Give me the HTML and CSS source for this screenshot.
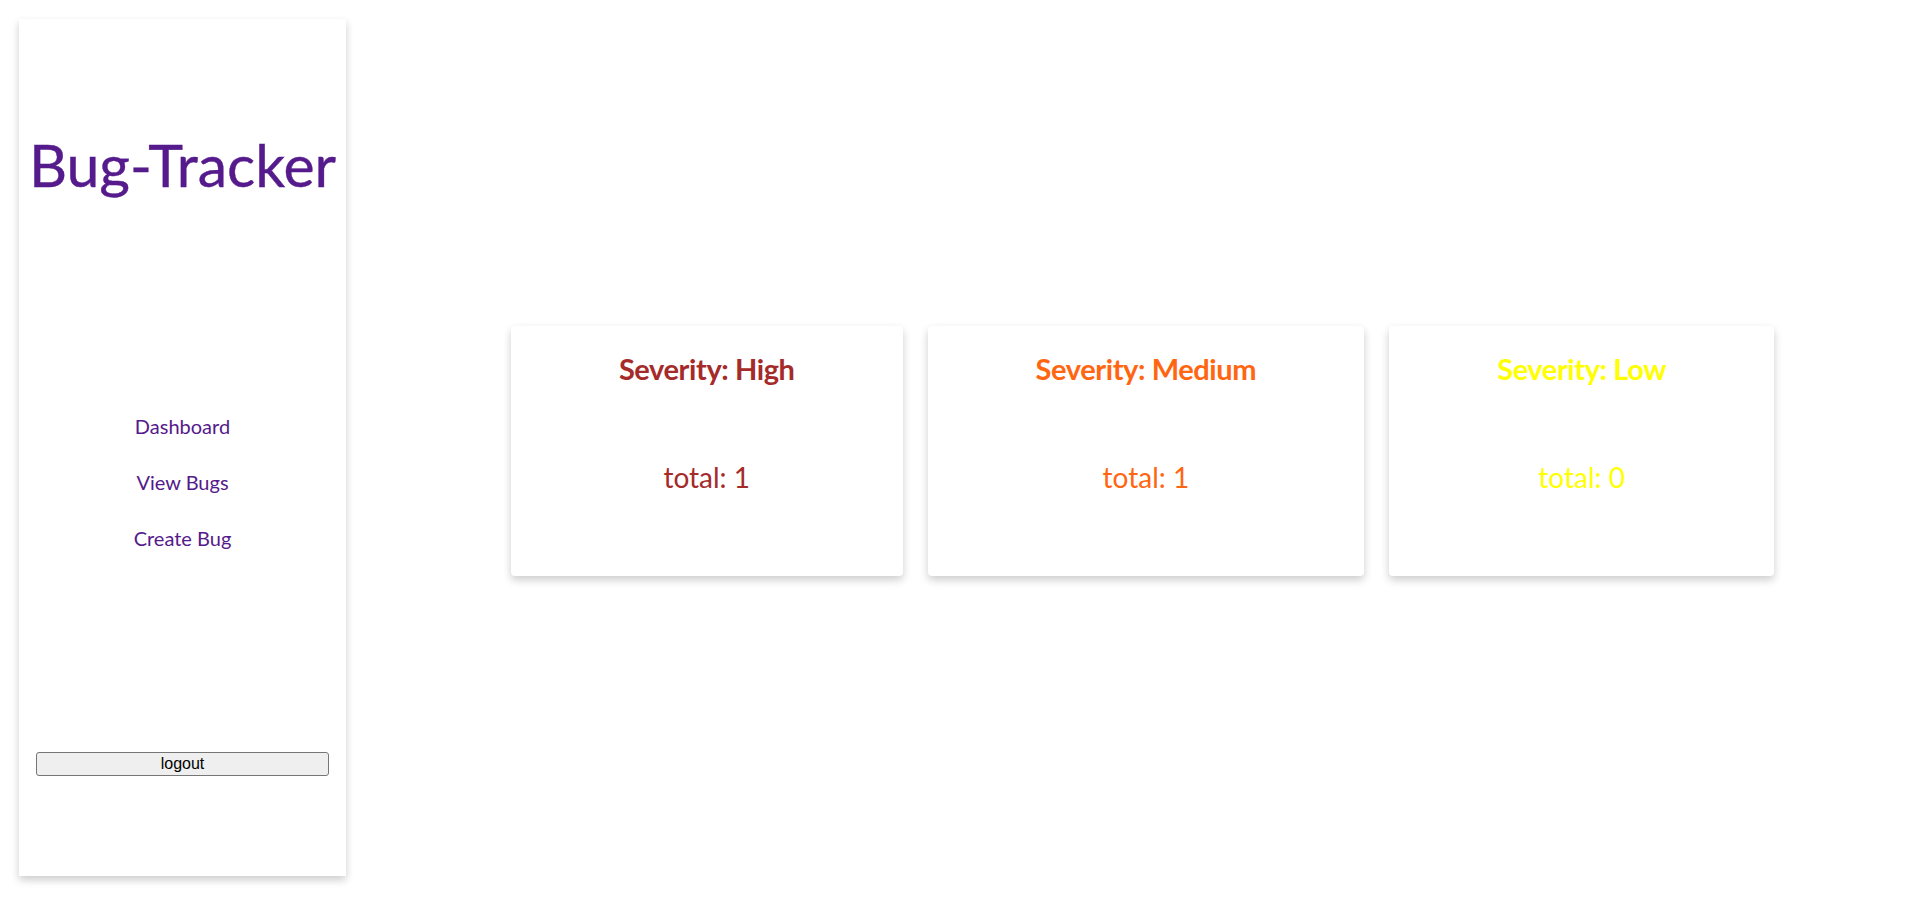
FILE: index.html
```html
<!DOCTYPE html>
<html lang="en">
<head>
<meta charset="utf-8">
<title>Bug-Tracker</title>
<link rel="stylesheet" href="styles.css">
</head>
<body>
<div class="layout">
  <aside class="sidebar">
    <a class="brand" href="#">Bug-Tracker</a>
    <nav class="nav">
      <a class="nav-link" href="#">Dashboard</a>
      <a class="nav-link" href="#">View Bugs</a>
      <a class="nav-link" href="#">Create Bug</a>
    </nav>
    <button class="logout" type="button">logout</button>
  </aside>
  <main class="main">
    <div class="cards">
      <section class="card card-high">
        <h2 class="card-title">Severity: High</h2>
        <p class="card-total">total: 1</p>
      </section>
      <section class="card card-medium">
        <h2 class="card-title">Severity: Medium</h2>
        <p class="card-total">total: 1</p>
      </section>
      <section class="card card-low">
        <h2 class="card-title">Severity: Low</h2>
        <p class="card-total">total: 0</p>
      </section>
    </div>
  </main>
</div>
</body>
</html>
```

FILE: styles.css
```css
* { box-sizing: border-box; }

html, body {
  margin: 0;
  padding: 0;
  background: #ffffff;
}

body {
  font-family: "Lato", "Open Sans", sans-serif;
}

.layout {
  display: flex;
  height: 898px;
}

.sidebar {
  flex: 0 0 327px;
  width: 327px;
  height: 857px;
  margin: 19px;
  padding-top: 111px;
  background: #ffffff;
  box-shadow: 0 4px 8px rgba(0, 0, 0, 0.2);
  display: flex;
  flex-direction: column;
  align-items: center;
}

.brand {
  display: block;
  font-size: 59px;
  line-height: 70px;
  color: #551a8b;
  text-decoration: none;
  white-space: nowrap;
  -webkit-text-stroke: 0.4px #551a8b;
}

.nav {
  display: flex;
  flex-direction: column;
  align-items: center;
  margin-top: 198px;
}

.nav-link {
  display: block;
  font-size: 20px;
  line-height: 56px;
  height: 56px;
  color: #551a8b;
  text-decoration: none;
}

.logout {
  align-self: stretch;
  margin: 186px 17px 0;
  height: 24px;
  padding: 0;
  font-family: "Liberation Sans", Arial, sans-serif;
  font-size: 16px;
  color: #000000;
  background: #efefef;
  border: 1px solid #767676;
  border-radius: 3px;
}

.main {
  flex: 1;
  display: flex;
  align-items: center;
  justify-content: center;
  padding-top: 4px;
}

.cards {
  display: flex;
  gap: 25px;
}

.card {
  height: 250px;
  padding: 25px 108px 0;
  background: #ffffff;
  border-radius: 4px;
  box-shadow: 0 4px 8px rgba(0, 0, 0, 0.2);
  text-align: center;
}

.card-title {
  margin: 0;
  font-size: 29px;
  line-height: 36px;
  font-weight: 700;
  letter-spacing: -0.4px;
  white-space: nowrap;
}

.card-total {
  margin: 73px 0 0;
  font-size: 28px;
  line-height: 34px;
  font-weight: 400;
  white-space: nowrap;
}

.card-high { color: #a52a2a; }
.card-medium { color: #ff6611; }
.card-low { color: #ffff00; }
```
